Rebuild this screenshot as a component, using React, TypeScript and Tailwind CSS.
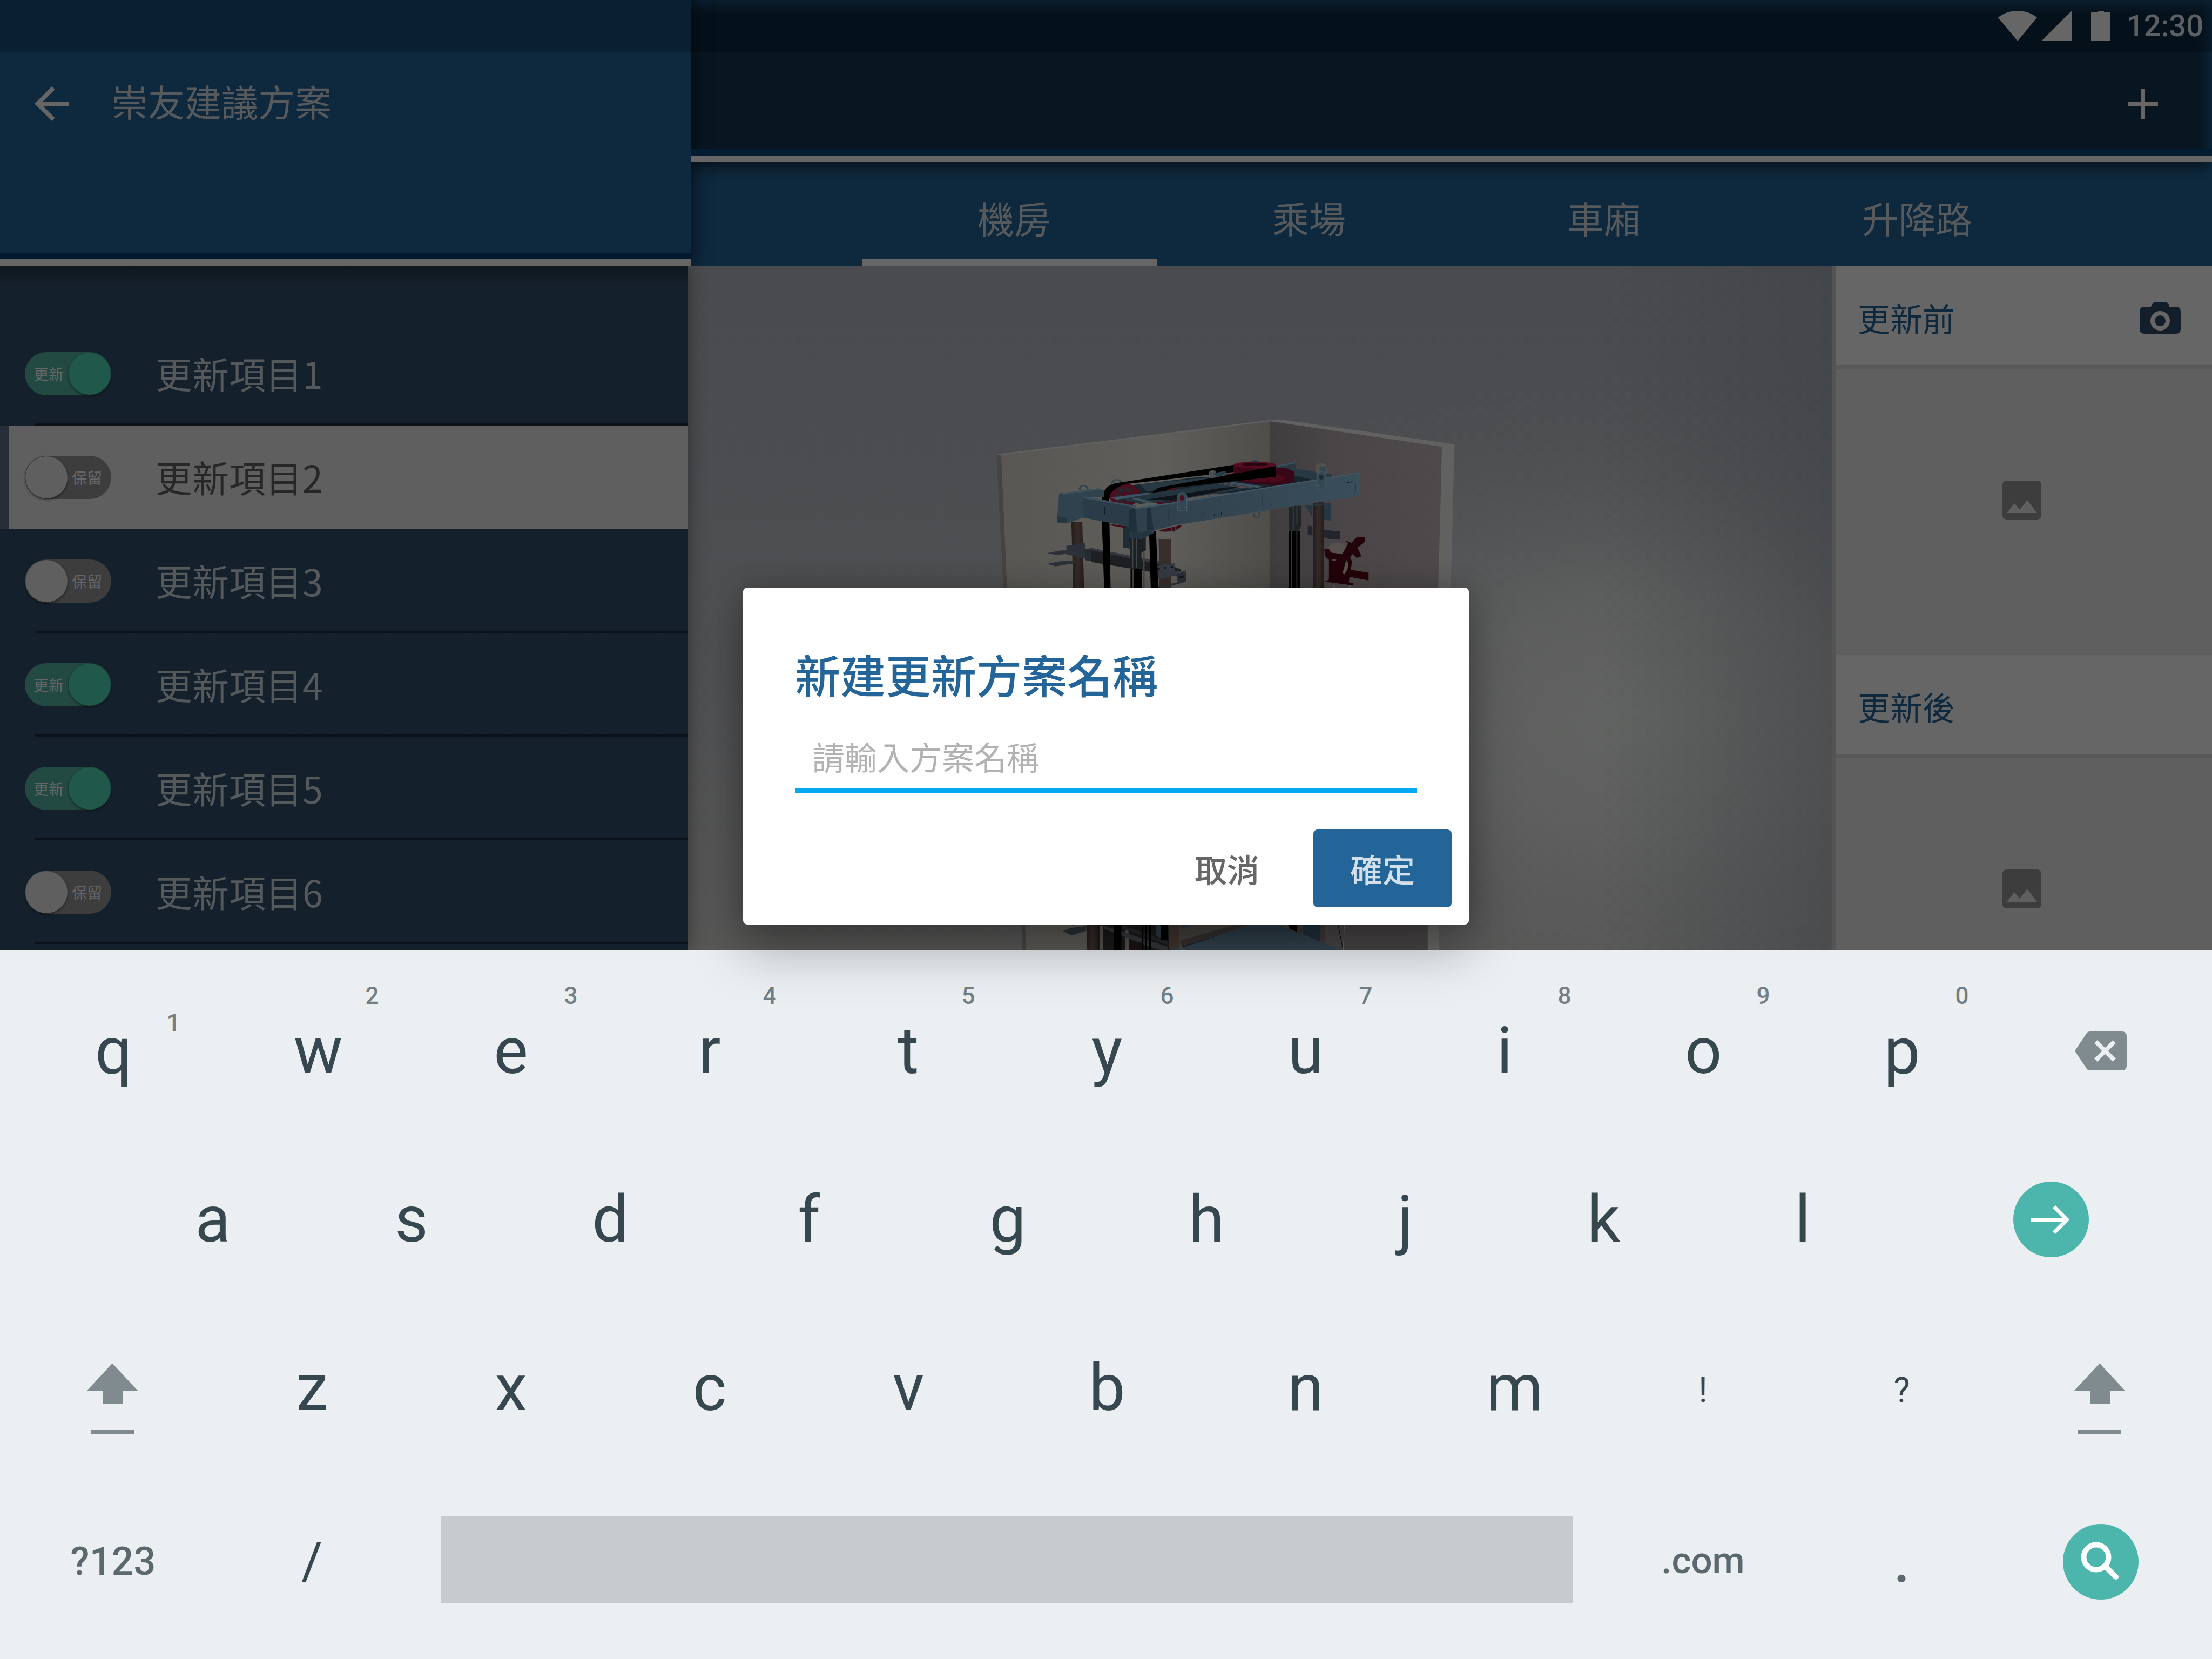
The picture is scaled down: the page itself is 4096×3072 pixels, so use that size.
import React from "react";
import { MdAdd, MdArrowBack, MdBackspace, MdImage } from "react-icons/md";

const items = [
  { label: "更新項目1", on: true },
  { label: "更新項目2", on: false, selected: true },
  { label: "更新項目3", on: false },
  { label: "更新項目4", on: true },
  { label: "更新項目5", on: true },
  { label: "更新項目6", on: false },
];

const tabs = ["機房", "乘場", "車廂", "升降路"];

function Toggle({ on }: { on: boolean }) {
  return (
    <div
      className={
        on
          ? "flex h-20 w-40 items-center justify-between rounded-full bg-[#224a42] pl-4 pr-px"
          : "flex h-20 w-40 flex-row-reverse items-center justify-between rounded-full bg-[#3d3d3d] pl-px pr-[17px]"
      }
    >
      <span className="text-[28px] leading-10 text-[#666666]">{on ? "更新" : "保留"}</span>
      <span
        className={
          on
            ? "size-[78px] rounded-full bg-[#205849] shadow-[0_2px_4px_rgba(0,0,0,0.5)]"
            : "size-[78px] rounded-full bg-[#5f5f5f] shadow-[0_2px_4px_rgba(0,0,0,0.5)]"
        }
      />
    </div>
  );
}

function Header() {
  return (
    <header className="flex h-[492px] overflow-hidden">
      <div className="z-10 flex w-[1280px] flex-col border-b-[12px] border-[#666666] bg-[#0e283d] shadow-[0_0_32px_rgba(0,0,0,0.65)]">
        <div className="h-24 bg-[#0a1f30]" />
        <div className="flex h-48 items-center pl-12">
          <MdArrowBack className="size-24 text-[#666666]" />
          <h1 className="mb-[10px] ml-[62px] text-[68px] leading-none text-[#565a5d]">崇友建議方案</h1>
        </div>
        <div className="mt-auto h-3 bg-[#031a2e]" />
      </div>
      <div className="relative flex flex-1 flex-col bg-[#0e283d]">
        <div className="h-24 bg-[#0a1f30]" />
        <div className="absolute -left-10 right-2 top-3 h-[300px] bg-black/45 blur-[10px]" />
        <div className="absolute right-0 top-0 flex h-24 items-center pr-4">
          <svg className="h-14 w-[208px]" viewBox="0 0 208 56" fill="#666666">
            <path d="M0 12.500C10 4 23 0 36 0s26 4 36 12.500L36 56z" />
            <path d="M136 0v56H80z" />
            <path d="M172 3h12V0h12v3h12v53h-36z" />
          </svg>
          <span className="ml-[30px] font-['Roboto'] text-[56px] font-medium leading-none text-[#5c6063]">12:30</span>
        </div>
        <div className="z-10 flex h-[180px] items-center justify-end pr-20 pt-3">
          <MdAdd className="size-24 text-[#666666]" />
        </div>
        <div className="z-10 h-3 bg-[#041c31]" />
        <div className="z-10 h-3 bg-[#666666]" />
        <nav className="z-10 flex h-48 pl-[316px]">
          {tabs.map((t, i) => (
            <div
              key={t}
              className={
                i === 0
                  ? "w-[546px] border-b-[12px] border-[#666666] pl-[214px] pt-[69px] text-[68px] leading-none text-[#565a5d]"
                  : "w-[546px] pl-[214px] pt-[69px] text-[68px] leading-none text-[#565a5d]"
              }
            >
              {t}
            </div>
          ))}
        </nav>
      </div>
    </header>
  );
}

function ItemList() {
  return (
    <aside className="z-10 w-[1274px] bg-linear-to-b from-[#0e171e] to-[#14202b] to-[36px] pt-[104px] shadow-[0_0_32px_rgba(0,0,0,0.4)]">
      {items.map((it) => (
        <div
          key={it.label}
          className={
            it.selected
              ? "flex h-48 border-l-16 border-[#282d37] bg-[#5f5f5f] pl-[30px]"
              : "relative flex h-48 pl-[46px]"
          }
        >
          <div className="mt-14 shrink-0">
            <Toggle on={it.on} />
          </div>
          <span
            className={
              it.selected
                ? "ml-[82px] mt-[61px] whitespace-nowrap text-[68px] leading-none text-[#272727]"
                : "ml-[82px] mt-[61px] whitespace-nowrap text-[68px] leading-none text-[#55595c]"
            }
          >
            {it.label}
          </span>
          {!it.selected && <i className="absolute bottom-0 left-16 right-0 h-1 bg-[#0b121a]" />}
        </div>
      ))}
    </aside>
  );
}

/* Lift shaft cut-away: two walls, the hoist frame with its sheaves, guide rails and the car below. */
function LiftModel() {
  return (
    <svg className="h-[1268px] w-[2118px]" viewBox="1274 492 2118 1268">
      <defs>
        <linearGradient id="bg" x1="0" y1="0" x2="0" y2="1">
          <stop offset="0" stopColor="#494b4e" />
          <stop offset="0.3" stopColor="#4b4d50" />
          <stop offset="0.6" stopColor="#505153" />
          <stop offset="1" stopColor="#585857" />
        </linearGradient>
        <radialGradient id="glow" cx="0.84" cy="0.66" r="0.5">
          <stop offset="0" stopColor="#626462" />
          <stop offset="0.35" stopColor="#606160" stopOpacity="0.8" />
          <stop offset="0.7" stopColor="#5a5b5b" stopOpacity="0.3" />
          <stop offset="1" stopColor="#56575a" stopOpacity="0" />
        </radialGradient>
        <linearGradient id="edge" x1="0" y1="0" x2="1" y2="0">
          <stop offset="0.8" stopColor="#3f4246" stopOpacity="0" />
          <stop offset="1" stopColor="#3f4246" stopOpacity="0.55" />
        </linearGradient>
        <linearGradient id="wallL" x1="0" y1="0" x2="1" y2="0">
          <stop offset="0" stopColor="#595753" />
          <stop offset="0.6" stopColor="#605e5b" />
          <stop offset="1" stopColor="#4e4d4a" />
        </linearGradient>
        <linearGradient id="wallR" x1="0" y1="0" x2="1" y2="0">
          <stop offset="0" stopColor="#403d3e" />
          <stop offset="0.4" stopColor="#4a4647" />
          <stop offset="1" stopColor="#4e4a4b" />
        </linearGradient>
        <linearGradient id="steel" x1="0" y1="0" x2="1" y2="0">
          <stop offset="0" stopColor="#2f404c" />
          <stop offset="0.5" stopColor="#344652" />
          <stop offset="1" stopColor="#394e5b" />
        </linearGradient>
        <linearGradient id="rail" x1="0" y1="0" x2="1" y2="0">
          <stop offset="0" stopColor="#231d1b" />
          <stop offset="0.5" stopColor="#352c29" />
          <stop offset="1" stopColor="#241d1b" />
        </linearGradient>
        <linearGradient id="carRoof" x1="0" y1="0" x2="0" y2="1">
          <stop offset="0" stopColor="#293945" />
          <stop offset="1" stopColor="#33444f" />
        </linearGradient>
      </defs>
      <rect x="1274" y="492" width="2118" height="1268" fill="url(#bg)" />
      <rect x="1274" y="492" width="2118" height="1268" fill="url(#glow)" />
      <rect x="1274" y="492" width="2118" height="1268" fill="url(#edge)" />
      <g transform="translate(1780 740) scale(0.61224 0.33333)">
        {/* walls */}
        <path d="M106 304 940 112 965 110 1492 248 1480 1100H128z" fill="#61615f" />
        <path d="M106 304 121 308 140 1100H128z" fill="#474342" />
        <path d="M121 308 934 120V1100H140z" fill="url(#wallL)" />
        <path d="M934 120 1454 262 1442 1100H934z" fill="url(#wallR)" />
        {/* rear rails */}
        <path d="M333 680H366L372 1100H339z" fill="url(#rail)" />
        <path d="M597 772 606 776 634 773V1100H600z" fill="#382f2c" />
        <path d="M1064 570H1096V1100H1064z" fill="url(#rail)" />
        {/* brackets */}
        <path d="M318 812 374 796V880L318 860zM260 853 300 838 345 836 340 850 290 864zM260 912 300 898 345 896 340 910 285 926z" fill="#2c3038" />
        <path d="M374 830 394 826 398 898 374 892z" fill="#262a31" />
        <path d="M392 824 600 900 664 942V985L394 902z" fill="#1e2023" />
        <path d="M392 824 600 900 664 942 600 915 392 836z" fill="#33363d" />
        <path d="M588 924 645 908V955L683 948 655 975 600 995 565 985 590 972z" fill="#363b42" />
        <path d="M650 970 680 955V1012L615 1044H580L655 1015z" fill="#2c3138" />
        <ellipse cx="597" cy="941" rx="4" ry="7" fill="#15181b" />
        <ellipse cx="617" cy="936" rx="4" ry="7" fill="#15181b" />
        <ellipse cx="637" cy="930" rx="4" ry="7" fill="#15181b" />
        <path d="M658 984 674 976V988L658 992z" fill="#15181b" />
        {/* hanging ropes */}
        <path d="M425 660H448L452 1100H433zM568 730H589L597 1100H574z" fill="#000000" />
        <path d="M490 700H510V828L490 822z" fill="#1f2c35" />
        <path d="M508 765H558V838L545 850V940H514z" fill="#1c2124" />
        <path d="M518 770V935M530 770V935" stroke="#43474a" strokeWidth="4" />
        <path d="M512 940H546V1100H512z" fill="#000000" />
        <path d="M519 940V1100M552 850V1100" stroke="#4b403b" strokeWidth="5" />
        <path d="M990 590H1028V700L1020 732H992z" fill="#1f2427" />
        <path d="M1004 592V730M1015 592V690" stroke="#3c4144" strokeWidth="3" />
        <path d="M990 732H1024V1100H990z" fill="#000000" />
        <path d="M998 732V1100M1015 732V1100" stroke="#3a3a39" strokeWidth="3" />
        {/* right bracket and governor */}
        <path d="M1040 590 1100 575H1118V672L1096 668V585L1062 592V655z" fill="#263743" />
        <path d="M1048 700 1062 704V756L1048 750zM1096 724 1146 732V778L1116 776 1096 764z" fill="#20262b" />
        <ellipse cx="1138" cy="828" rx="28" ry="33" fill="#56514c" />
        <path d="M1098 832 1112 828 1118 850 1152 858 1170 800 1162 782 1180 796 1196 765 1222 762 1220 790 1198 824 1206 850 1210 870 1196 880 1184 858 1176 875 1182 900 1172 1015 1186 1020V1032L1100 1012 1112 1000V890L1100 870z" fill="#22040a" />
        <path d="M1176 944 1232 962V1004L1176 985z" fill="#240409" />
        <path d="M1122 885H1134V893L1122 897z" fill="#4a4647" />
        <path d="M1164 890Q1180 920 1158 972L1154 960Q1160 920 1164 890z" fill="#58524d" />
        <path d="M1128 1030V1060M1175 1030V1060" stroke="#62605d" strokeWidth="4" />
        {/* frame, far side */}
        <path d="M955 365 1013 347V385L1120 415V450L1010 450 955 400z" fill="#283944" />
        <path d="M955 365 1013 347V354L960 372z" fill="#3c515e" />
        <path d="M520 475 720 430 1000 420 1100 460 800 520 500 560z" fill="#18232b" />
        <path d="M540 470 760 430 850 440 600 500 560 510z" fill="#283944" />
        <ellipse cx="888" cy="345" rx="12" ry="8" fill="#273a46" />
        <path d="M456 465a14 20 0 0 1 28 0M358 500a12 24 0 0 1 24 0" fill="none" stroke="#2f414d" strokeWidth="6" />
        {/* hoist motor */}
        <path d="M840 455 860 430 955 380 985 382 1008 402V455L960 475 900 470z" fill="#380616" />
        <ellipse cx="915" cy="437" rx="66" ry="22" fill="#4a0a1c" />
        <path d="M824 362V408L800 415 850 435 952 430V362z" fill="#400918" />
        <ellipse cx="888" cy="362" rx="64" ry="17" fill="#530c20" />
        <ellipse cx="888" cy="360" rx="39" ry="9" fill="#2a0410" />
        <path d="M828 380Q888 402 948 380M828 390Q888 412 948 390" fill="none" stroke="#240610" strokeWidth="2" />
        {/* sheaves */}
        <path d="M450 690 500 705 492 712 455 700zM600 725 668 695Q655 740 600 732z" fill="#400918" />
        <ellipse cx="494" cy="530" rx="46" ry="64" fill="#500b1e" />
        <ellipse cx="494" cy="530" rx="30" ry="45" fill="#25262c" />
        <path d="M494 480V580M468 510 520 550M520 510 468 550" stroke="#500b1e" strokeWidth="9" />
        <ellipse cx="634" cy="552" rx="46" ry="62" fill="#500b1e" />
        <ellipse cx="634" cy="552" rx="29" ry="44" fill="#25262c" />
        <path d="M634 505V600M608 530 660 570M660 530 608 570" stroke="#500b1e" strokeWidth="9" />
        {/* belts */}
        <path d="M425 556Q430 470 475 462L824 362V402L520 464Q475 470 452 520L446 566z" fill="#010101" />
        <path d="M568 568Q572 500 605 486L952 370V428L650 488Q612 492 590 572z" fill="#010101" />
        <path d="M748 410a12 18 0 0 1 24 0V432L748 438z" fill="#4c4f53" />
        <path d="M762 408 800 397V415L775 432z" fill="#293d4a" />
        {/* frame, near side */}
        <path d="M296 522 415 493 432 505V540L372 540 368 655 320 688 290 682V650z" fill="#2f424e" />
        <path d="M296 522 415 493 425 500 310 528z" fill="#3b505d" />
        <path d="M290 650 320 658V688L290 682z" fill="#263742" />
        <path d="M368 537 530 590 512 604V708L415 672 368 655z" fill="#2b3c48" />
        <path d="M368 537 530 590 522 597 370 548z" fill="#3b505d" />
        <path d="M470 545 820 455 910 480 640 560 540 580z" fill="#24343f" />
        <path d="M560 555 790 490 860 480 640 560z" fill="#0e1418" />
        <path d="M452 544 570 515V525L470 556zM515 550 530 546 580 570 570 578zM820 458 912 482 895 490 805 464z" fill="#3f5564" />
        <path d="M780 465 830 485 880 492M795 465 840 480 880 487" fill="none" stroke="#544d4d" strokeWidth="4" />
        <path d="M512 602 636 572 1205 404V534L1010 590 640 700 582 728V740L545 774 512 768z" fill="url(#steel)" />
        <path d="M512 602 636 572 1205 404V410L636 580 520 610z" fill="#425866" />
        <path d="M508 608 526 600 532 740 508 740zM562 600 572 600 582 725 560 728z" fill="#20303a" />
        <path d="M512 740 580 728 575 745 552 772 512 768z" fill="#24353f" />
        <path d="M628 610V672M912 515V590M434 595V640M1192 468V507M734 625V641M765 634V646M787 624V640" stroke="#111c23" strokeWidth="2" />
        <circle cx="1171" cy="460" r="3" fill="#101a20" />
        <circle cx="1181" cy="457" r="3" fill="#101a20" />
        <path d="M1072 375a17 24 0 0 1 34 0V408H1072z" fill="#53504d" />
        <path d="M1084 375 1102 370V405H1084z" fill="#324654" />
        <path
          d="M655 615V540a13 24 0 0 1 27 0V620zM1076 500V425a13 24 0 0 1 27 0V495z"
          fill="#334753"
          stroke="#435866"
          strokeWidth="3"
        />
        <ellipse cx="668" cy="546" rx="7" ry="15" fill="#500b1e" />
        <ellipse cx="1089" cy="430" rx="7" ry="14" fill="#1e2c35" />
        <circle cx="662" cy="600" r="3" fill="#5a5552" />
        <circle cx="677" cy="598" r="3" fill="#5a5552" />
        <circle cx="1083" cy="478" r="3" fill="#5a5552" />
        <circle cx="1098" cy="475" r="3" fill="#5a5552" />
        <path d="M886 632V645a8 12 0 0 0 16 0V625M636 708V720a6 12 0 0 0 12 0V702" fill="none" stroke="#2f414d" strokeWidth="5" />
      </g>
      <g transform="translate(1860 1690) scale(0.53571 0.33333)">
        {/* lower end of the shaft */}
        <path d="M56 -20H1503V220H62z" fill="#666664" />
        <path d="M56 -20H70L75 220H62z" fill="#4a4445" />
        <path d="M70 -20H300V220H75z" fill="#5c5a56" />
        <path d="M1100 -20H1463V220H1100z" fill="#484445" />
        <path d="M202 102 228 85 283 74V100L232 126zM222 60H245L235 72z" fill="#2a3035" />
        <path d="M284 -20H324V220H286z" fill="url(#rail)" />
        <path d="M324 -20H604V220H324z" fill="#1b191a" />
        <path d="M330 72 340 72V220H330zM416 80 428 80 432 220H418z" fill="#55524d" />
        <path d="M340 70 565 190V215L520 200 345 90z" fill="#34363b" />
        <path d="M408 68 565 160V180L408 90z" fill="#24262a" />
        <path d="M378 -20H404V220H378zM474 -20H480V220H474zM486 -20H492V220H486zM500 -20H506V220H500zM541 -20H564V150H541z" fill="#000000" />
        <path d="M430 220V180Q460 150 475 170V220z" fill="#1c1414" />
        <path d="M525 60H540V140L525 130z" fill="#2b3b46" />
        <path d="M566 -20H604V190L568 210z" fill="#3f3530" />
        <path d="M604 -20H950V80L604 190z" fill="#45413d" />
        <path d="M610 60H665L610 92z" fill="#2f3a42" />
        <path d="M606 155 800 66 860 66 612 180z" fill="#33302f" />
        <path d="M612 182 862 66 880 66 614 200z" fill="#26282c" />
        <path d="M940 60H984V110z" fill="#45413d" />
        <path d="M984 60H1010V115L984 100z" fill="#000000" />
        <path d="M1010 -20H1030V130L1010 115z" fill="#3d332f" />
        <path d="M1030 -20H1092V160L1030 125z" fill="#1f303c" />
        <path d="M1092 -20H1108V170L1092 160z" fill="#403735" />
        <path d="M614 195 862 60H940L1172 212H620z" fill="url(#carRoof)" />
        <path d="M565 212 600 192 616 195 612 220H565z" fill="#3a4047" />
        <path d="M1153 66 1171 212" stroke="#0c0c0c" strokeWidth="2" />
        <path d="M1175 66 1171 212" stroke="#6a6866" strokeWidth="2" />
      </g>
    </svg>
  );
}

function Section({ title, camera }: { title: string; camera?: boolean }) {
  return (
    <section className="h-[720px] shrink-0">
      <div className="flex h-48 items-center justify-between border-b-8 border-[#585858] bg-[#666666] pl-10 pr-[58px]">
        <h2 className="mt-2 text-[60px] leading-none text-[#0e283d]">{title}</h2>
        {camera && (
          <svg className="mt-[7px] h-[60px] w-[76px]" viewBox="0 0 76 60">
            <path
              d="M9 10H21Q23 1 31 1H46Q54 1 55 10H67Q76 10 76 19V51Q76 60 67 60H9Q0 60 0 51V19Q0 10 9 10Z"
              fill="#141e2b"
            />
            <circle cx="38" cy="36" r="14" fill="#141e2b" stroke="#666666" strokeWidth="8" />
          </svg>
        )}
      </div>
      <div className="flex h-[528px] justify-center bg-[#5f5f5f] pr-2">
        <MdImage className="mt-[194px] size-24 text-[#3d3d3d]" />
      </div>
    </section>
  );
}

function Dialog() {
  return (
    <div
      role="dialog"
      className="absolute left-[1376px] top-[1088px] z-30 flex h-[624px] w-[1344px] flex-col rounded-lg bg-white px-24 pt-[118px] shadow-[0_48px_96px_rgba(0,0,0,0.28),0_0_48px_rgba(0,0,0,0.2)]"
    >
      <h2 className="text-[84px] font-medium leading-none text-[#236499]">新建更新方案名稱</h2>
      <div className="mt-20 h-[98px] border-b-8 border-[#03a9f4] pl-8 text-[60px] leading-none text-[#b2b2b2]">
        請輸入方案名稱
      </div>
      <div className="-mr-16 mt-[68px] flex h-36 justify-end gap-8 text-[60px] font-medium leading-[144px]">
        <button className="w-64 rounded-lg text-[#666666]">取消</button>
        <button className="w-64 rounded-lg bg-[#236499] text-[#d3e0eb]">確定</button>
      </div>
    </div>
  );
}

function Key({ char, hint, low }: { char: string; hint?: string; low?: boolean }) {
  return (
    <div className="relative flex h-[312px] w-[368px] shrink-0 justify-center">
      <span className="ml-1 w-[68px] whitespace-nowrap text-center text-[120px] leading-[312px] text-[#37474f]">
        {char}
      </span>
      {hint && (
        <span
          className={
            low
              ? "absolute left-[273px] top-[78px] w-12 text-center text-[44px] font-medium leading-[52px] text-[#737f84]"
              : "absolute left-[273px] top-7 w-12 text-center text-[44px] font-medium leading-[52px] text-[#737f84]"
          }
        >
          {hint}
        </span>
      )}
    </div>
  );
}

function Shift() {
  return (
    <div className="flex h-[312px] w-[368px] shrink-0 flex-col items-center pt-[110px]">
      <svg className="h-20 w-24" viewBox="0 0 96 80" fill="#808b8f">
        <path d="M48 .5 95.500 51.500H67V76H31V51.500H.5z" />
      </svg>
      <div className="mt-11 h-2 w-20 bg-[#808b8f]" />
    </div>
  );
}

function Keyboard() {
  return (
    <div className="h-[1312px] bg-[#ebeff2] pt-[30px] font-['Roboto']">
      <div className="flex h-[312px] pl-6">
        {"qwertyuiop".split("").map((c, i) => (
          <Key key={c} char={c} hint={String((i + 1) % 10)} low={i === 0} />
        ))}
        <div className="flex w-[368px] items-center justify-center pl-1">
          <MdBackspace className="size-24 text-[#808b8f]" />
        </div>
      </div>
      <div className="flex h-[312px] pl-52">
        {"asdfghjkl".split("").map((c) => (
          <Key key={c} char={c} />
        ))}
        <div className="ml-[208px] mt-[86px] size-[140px] rounded-full bg-[#4db6ac]">
          <svg viewBox="0 0 140 140" fill="none" stroke="#ffffff" strokeWidth="7">
            <path d="M32 70.500H101M75.500 46.500 99.500 70.500 75.500 94.500" />
          </svg>
        </div>
      </div>
      <div className="flex h-[312px] pl-6">
        <Shift />
        {"zxcvbnm".split("").map((c) => (
          <Key key={c} char={c} />
        ))}
        <span className="w-[368px] pl-[3px] text-center text-[64px] leading-[321px] text-[#37474f]">!</span>
        <span className="w-[368px] pl-[3px] text-center text-[64px] leading-[321px] text-[#37474f]">?</span>
        <Shift />
      </div>
      <div className="flex h-[312px] pl-6 leading-[331px] text-[#5b696f]">
        <span className="w-[368px] pl-[3px] text-center text-[72px] font-medium">?123</span>
        <span className="w-[368px] pl-[3px] text-center text-[96px] text-[#37474f]">/</span>
        <div className="mx-14 mt-[82px] h-40 w-[2096px] bg-[#c7cbce]" />
        <span className="w-[368px] pl-[3px] text-center text-[69px] font-medium leading-[327px]">.com</span>
        <span className="w-[368px] pl-[3px] text-center text-[110px] font-medium">.</span>
        <div className="ml-[116px] mt-24 size-[140px] rounded-full bg-[#4db6ac]">
          <svg viewBox="0 0 140 140" fill="none" stroke="#ffffff" strokeWidth="10" strokeLinecap="round">
            <circle cx="61.500" cy="61.500" r="23" />
            <path d="M79 79 98 98" />
          </svg>
        </div>
      </div>
    </div>
  );
}

export default function App() {
  return (
    <div className="relative h-[3072px] w-[4096px] overflow-hidden bg-[#ebeff2] font-['Noto_Sans_CJK_TC',sans-serif]">
      <Header />
      <div className="flex h-[1268px] overflow-hidden">
        <ItemList />
        <LiftModel />
        <div className="w-[704px] border-l-8 border-[#545454]">
          <Section title="更新前" camera />
          <Section title="更新後" />
        </div>
      </div>
      <Keyboard />
      <Dialog />
    </div>
  );
}
